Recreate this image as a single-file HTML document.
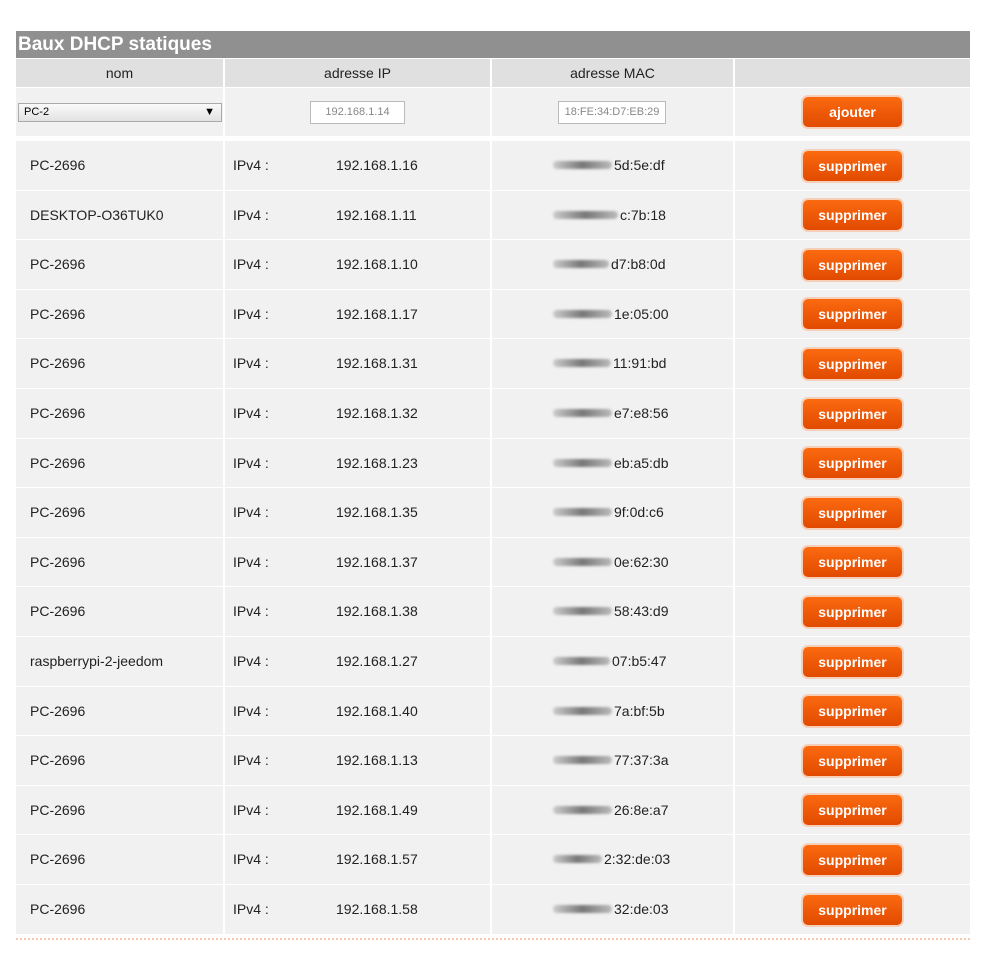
<!DOCTYPE html>
<html><head><meta charset="utf-8"><style>
body{margin:0;width:999px;height:968px;background:#fff;font-family:"Liberation Sans",sans-serif;position:relative;overflow:hidden}
.a{position:absolute}
.title{left:16px;top:31px;width:954px;height:27px;background:#909090;color:#fff;font-weight:bold;font-size:19px;line-height:28px;text-indent:2px}
.hd{top:59px;height:28px;background:#e0e0e0;font-size:14px;line-height:28px;text-align:center;color:#222}
.cell{background:#f1f1f1}
.btn{position:absolute;left:803px;width:99px;height:30px;border-radius:5px;background:linear-gradient(#fb6a10,#e14a00);box-shadow:0 0 0 2px #f6cfb8;color:#fff;font-weight:bold;font-size:14px;line-height:30px;text-align:center}
.t{position:absolute;font-size:14px;color:#222;line-height:18px}
.inp{position:absolute;background:#fff;border:1px solid #bbb;font-size:11px;color:#888;text-align:center;line-height:21px;height:21px}
.blur{position:absolute;height:8px;border-radius:4px;background:linear-gradient(90deg,#ccc,#777,#bbb);filter:blur(1.2px)}
</style></head><body>
<div class="a title">Baux DHCP statiques</div>
<div class="a hd" style="left:16px;width:207px">nom</div>
<div class="a hd" style="left:225px;width:265px">adresse IP</div>
<div class="a hd" style="left:492px;width:241px">adresse MAC</div>
<div class="a hd" style="left:735px;width:235px"></div>
<div class="a cell" style="left:16px;top:88px;width:207px;height:48px"></div>
<div class="a cell" style="left:225px;top:88px;width:265px;height:48px"></div>
<div class="a cell" style="left:492px;top:88px;width:241px;height:48px"></div>
<div class="a cell" style="left:735px;top:88px;width:235px;height:48px"></div>
<div class="a" style="left:18px;top:103px;width:202px;height:17px;border:1px solid #aaa;background:linear-gradient(#fafafa,#e2e2e2);font-size:11px;line-height:17px;text-indent:5px">PC-2<span style="position:absolute;right:6px;font-size:11px">▼</span></div>
<div class="inp" style="left:310px;top:101px;width:93px">192.168.1.14</div>
<div class="inp" style="left:558px;top:101px;width:106px">18:FE:34:D7:EB:29</div>
<div class="btn" style="top:97px">ajouter</div>
<div id="rows"></div>
<div class="a" style="left:16px;top:938px;width:954px;border-top:2px dotted #f7c9ad"></div>
<script>
var d=[["PC-2696","16","5d:5e:df",614],["DESKTOP-O36TUK0","11","c:7b:18",620],["PC-2696","10","d7:b8:0d",611],["PC-2696","17","1e:05:00",614],["PC-2696","31","11:91:bd",613],["PC-2696","32","e7:e8:56",614],["PC-2696","23","eb:a5:db",614],["PC-2696","35","9f:0d:c6",614],["PC-2696","37","0e:62:30",614],["PC-2696","38","58:43:d9",614],["raspberrypi-2-jeedom","27","07:b5:47",612],["PC-2696","40","7a:bf:5b",614],["PC-2696","13","77:37:3a",614],["PC-2696","49","26:8e:a7",614],["PC-2696","57","2:32:de:03",604],["PC-2696","58","32:de:03",614]];
var h="";
d.forEach(function(r,i){var t=141+i*49.6;
h+='<div class="a cell" style="left:16px;top:'+t+'px;width:207px;height:48.6px"></div><div class="a cell" style="left:225px;top:'+t+'px;width:265px;height:48.6px"></div><div class="a cell" style="left:492px;top:'+t+'px;width:241px;height:48.6px"></div><div class="a cell" style="left:735px;top:'+t+'px;width:235px;height:48.6px"></div>';
var y=t+15;
h+='<div class="t" style="left:30px;top:'+y+'px">'+r[0]+'</div><div class="t" style="left:233px;top:'+y+'px">IPv4 :</div><div class="t" style="left:336px;top:'+y+'px">192.168.1.'+r[1]+'</div>';
h+='<div class="blur" style="left:553px;top:'+(y+5)+'px;width:'+(r[3]-555)+'px"></div><div class="t" style="left:'+r[3]+'px;top:'+y+'px">'+r[2]+'</div>';
h+='<div class="btn" style="top:'+(t+9.5)+'px">supprimer</div>';});
document.getElementById("rows").innerHTML=h;
</script>
</body></html>
